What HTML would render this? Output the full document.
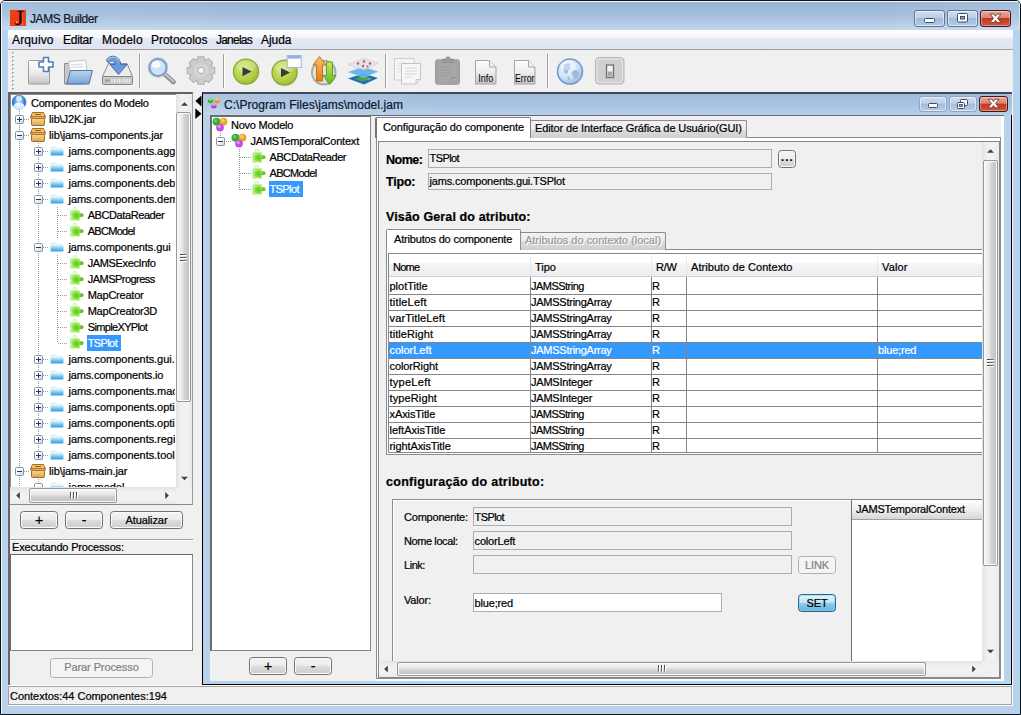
<!DOCTYPE html>
<html lang="pt"><head><meta charset="utf-8"><title>JAMS Builder</title>
<style>
*{box-sizing:border-box}
html,body{margin:0;padding:0}
body{width:1021px;height:715px;position:relative;overflow:hidden;background:#fff;font-family:"Liberation Sans",sans-serif;font-size:11px;color:#000;-webkit-text-stroke:0.22px currentColor;}
div,span,svg{position:absolute}
.t{white-space:pre;line-height:16px;height:16px;letter-spacing:-0.18px}
.b{font-weight:bold}
.sel{background:#3399ff;color:#fff}
.btn{border:1px solid #707070;border-radius:3.5px;background:linear-gradient(#f3f3f3 0%,#ececec 46%,#dcdcdc 54%,#cdcdcd 100%);box-shadow:inset 0 0 0 1px #fbfbfb;text-align:center;line-height:15px;letter-spacing:-0.1px}
.btn.pm{font-size:14px;line-height:14px}
.btn.dis{border-color:#adb2b5;background:#f4f4f4;color:#838383;box-shadow:none}
.fld{border:1px solid #abadb3;background:#f0f0f0;line-height:16px;padding-left:0.6px;white-space:pre;letter-spacing:-0.18px;overflow:hidden}
.sbv{background:linear-gradient(90deg,#e3e3e3,#f0f0f0 30%,#f2f2f2 70%,#e9e9e9)}
.sbh{background:linear-gradient(#e3e3e3,#f0f0f0 30%,#f2f2f2 70%,#e9e9e9)}
.thv{border:1px solid #979797;border-radius:2px;background:linear-gradient(90deg,#f6f6f6 0%,#e9e9ea 40%,#d4d4d7 55%,#bfbfc4 100%);box-shadow:inset 0 0 0 1px #fbfbfb}
.thh{border:1px solid #979797;border-radius:2px;background:linear-gradient(#f6f6f6 0%,#e9e9ea 40%,#d4d4d7 55%,#bfbfc4 100%);box-shadow:inset 0 0 0 1px #fbfbfb}
.dotv{width:1px;background-image:linear-gradient(#9a9a9a 50%,transparent 50%);background-size:1px 2px}
.doth{height:1px;background-image:linear-gradient(90deg,#9a9a9a 50%,transparent 50%);background-size:2px 1px}
.exp{width:9px;height:9px;border:1px solid #8593a8;border-radius:1.5px;background:linear-gradient(135deg,#fff 35%,#ccd2dc)}
.exp i{position:absolute;left:1px;top:3px;width:5px;height:1px;background:#2b3a5c}
.exp b{position:absolute;left:3px;top:1px;width:1px;height:5px;background:#2b3a5c}
</style></head>
<body>
<svg width="0" height="0" style="left:0;top:0"><defs>
<radialGradient id="gGlobe" cx="50%" cy="45%" r="55%"><stop offset="0" stop-color="#c8ecff"/><stop offset="0.4" stop-color="#7ab8f2"/><stop offset="0.8" stop-color="#2d6fd6"/><stop offset="1" stop-color="#2257b8"/></radialGradient>
<linearGradient id="gFold" x1="0" y1="0" x2="0" y2="1"><stop offset="0" stop-color="#bfe6fb"/><stop offset="1" stop-color="#2f9fe6"/></linearGradient>
<linearGradient id="gJar" x1="0" y1="0" x2="0" y2="1"><stop offset="0" stop-color="#f7d79a"/><stop offset="1" stop-color="#e0a04a"/></linearGradient>
<radialGradient id="gGreen" cx="40%" cy="35%" r="70%"><stop offset="0" stop-color="#d2e877"/><stop offset="0.7" stop-color="#aecd45"/><stop offset="1" stop-color="#98ba34"/></radialGradient>
<linearGradient id="gPage" x1="0" y1="0" x2="0" y2="1"><stop offset="0" stop-color="#fdfdfd"/><stop offset="0.5" stop-color="#eeeeee"/><stop offset="1" stop-color="#c4c4c4"/></linearGradient>
<linearGradient id="gBlue" x1="0" y1="0" x2="0" y2="1"><stop offset="0" stop-color="#bcd3ef"/><stop offset="1" stop-color="#7aa2d6"/></linearGradient>
<radialGradient id="gGlobe2" cx="40%" cy="35%" r="70%"><stop offset="0" stop-color="#fafcff"/><stop offset="0.6" stop-color="#cfe0f3"/><stop offset="1" stop-color="#8fb4df"/></radialGradient>
<radialGradient id="gPuz" gradientUnits="userSpaceOnUse" cx="7.500" cy="8.800" r="7"><stop offset="0" stop-color="#58c916"/><stop offset="0.4" stop-color="#7fdb3c"/><stop offset="0.75" stop-color="#b4f07c"/><stop offset="1" stop-color="#cdf7a2"/></radialGradient>
</defs></svg>
<div style="left:0px;top:0px;width:1021px;height:715px;background:#b9d1ea;border:1px solid #0c121c;border-radius:5px 5px 0 0;"></div>
<div style="left:1px;top:1px;width:1019px;height:29px;border-radius:4px 4px 0 0;background:linear-gradient(90deg,rgba(255,255,255,.1),rgba(255,255,255,0) 25%,rgba(255,255,255,0) 85%,rgba(255,255,255,.1)),linear-gradient(#98b4d4 0%,#a2bddb 45%,#b3cae5 75%,#c4d7ec 100%);"></div>
<div style="left:3px;top:1px;width:1015px;height:1px;background:#f2f7fc"></div>
<div style="left:1px;top:3px;width:1px;height:27px;background:#eef5fb"></div>
<div style="left:1019px;top:3px;width:1px;height:27px;background:#d5e6f5"></div>
<div style="left:1px;top:30px;width:7px;height:684px;background:#b9d1ea;border-left:1px solid #eef8fa"></div>
<div style="left:1013px;top:30px;width:7px;height:684px;background:linear-gradient(90deg,#b9d1ea 30%,#a9d7f0)"></div>
<div style="left:2px;top:706px;width:1017px;height:8px;background:#b9d1ea"></div>
<svg style="left:10px;top:10px" width="16" height="16" viewBox="0 0 16 16"><rect width="16" height="16" fill="#ee3c14"/><rect x="11.600" y="2" width="1" height="13.500" fill="#f79a78" opacity=".8"/><text x="9.300" y="15.200" font-family="Liberation Serif,serif" font-size="22" text-anchor="middle" fill="#2e0808" stroke="#2e0808" stroke-width=".5">J</text><circle cx="6.600" cy="12.300" r=".9" fill="#f7d5c8"/></svg>
<span class="t " style="left:30px;top:11px;font-size:12px;letter-spacing:-0.43px;color:#10182c">JAMS Builder</span>
<div style="left:914px;top:10px;width:31px;height:17px;border:1px solid #5d7596;border-radius:3px;background:linear-gradient(#cfddef 0%,#bccfe7 45%,#9fbadb 50%,#b5cbe6 100%);box-shadow:inset 0 0 0 1px rgba(255,255,255,.55)"></div>
<div style="left:947px;top:10px;width:31px;height:17px;border:1px solid #5d7596;border-radius:3px;background:linear-gradient(#cfddef 0%,#bccfe7 45%,#9fbadb 50%,#b5cbe6 100%);box-shadow:inset 0 0 0 1px rgba(255,255,255,.55)"></div>
<div style="left:980px;top:10px;width:31px;height:17px;border:1px solid #431422;border-radius:3px;background:linear-gradient(#e9a99c 0%,#d98270 45%,#c4371c 50%,#cf5a3a 100%);box-shadow:inset 0 0 0 1px rgba(255,255,255,.35)"></div>
<svg style="left:914px;top:10px" width="31" height="17" viewBox="0 0 31 17"><rect x="10.500" y="8.500" width="10" height="4" rx="1" fill="#fff" stroke="#3c4a63"/></svg>
<svg style="left:947px;top:10px" width="31" height="17" viewBox="0 0 31 17"><rect x="10.500" y="3.500" width="10" height="8.500" rx="1" fill="#fff" stroke="#3c4a63"/><rect x="13.500" y="6.500" width="4" height="2.500" fill="#8ea3c0" stroke="#3c4a63"/></svg>
<svg style="left:980px;top:10px" width="31" height="17" viewBox="0 0 31 17"><path d="M10 4h3.800l1.700 2.200 1.700-2.200h3.800l-3.500 4.300 3.500 4.300h-3.800l-1.700-2.200-1.700 2.200h-3.800l3.500-4.300z" fill="#fff" stroke="#6b3a3a" stroke-width="0.9" stroke-linejoin="round"/></svg>
<div style="left:8px;top:30px;width:1005px;height:676px;background:#f0f0f0"></div>
<div style="left:1012px;top:92px;width:1px;height:593px;background:#eafafa"></div>
<div style="left:8px;top:30px;width:1005px;height:19px;background:linear-gradient(#fdfdfe 0%,#f5f7fc 38%,#e3e8f4 46%,#dfe4f2 100%)"></div>
<div style="left:8px;top:49px;width:1005px;height:1px;background:#a0a0a0"></div>
<span class="t " style="left:12px;top:32px;font-size:12px;letter-spacing:0.14px;">Arquivo</span>
<span class="t " style="left:63px;top:32px;font-size:12px;letter-spacing:-0.27px;">Editar</span>
<span class="t " style="left:102px;top:32px;font-size:12px;letter-spacing:0.27px;">Modelo</span>
<span class="t " style="left:151px;top:32px;font-size:12px;letter-spacing:-0.02px;">Protocolos</span>
<span class="t " style="left:216px;top:32px;font-size:12px;letter-spacing:-0.78px;">Janelas</span>
<span class="t " style="left:261px;top:32px;font-size:12px;letter-spacing:-0.05px;">Ajuda</span>
<div style="left:8px;top:50px;width:1005px;height:41px;background:#f0f0f0"></div>
<div style="left:12px;top:52px;width:2px;height:2px;background:#a8a8a8"></div>
<div style="left:13px;top:53px;width:1px;height:1px;background:#fff"></div>
<div style="left:12px;top:56px;width:2px;height:2px;background:#a8a8a8"></div>
<div style="left:13px;top:57px;width:1px;height:1px;background:#fff"></div>
<div style="left:12px;top:60px;width:2px;height:2px;background:#a8a8a8"></div>
<div style="left:13px;top:61px;width:1px;height:1px;background:#fff"></div>
<div style="left:12px;top:64px;width:2px;height:2px;background:#a8a8a8"></div>
<div style="left:13px;top:65px;width:1px;height:1px;background:#fff"></div>
<div style="left:12px;top:68px;width:2px;height:2px;background:#a8a8a8"></div>
<div style="left:13px;top:69px;width:1px;height:1px;background:#fff"></div>
<div style="left:12px;top:72px;width:2px;height:2px;background:#a8a8a8"></div>
<div style="left:13px;top:73px;width:1px;height:1px;background:#fff"></div>
<div style="left:12px;top:76px;width:2px;height:2px;background:#a8a8a8"></div>
<div style="left:13px;top:77px;width:1px;height:1px;background:#fff"></div>
<div style="left:12px;top:80px;width:2px;height:2px;background:#a8a8a8"></div>
<div style="left:13px;top:81px;width:1px;height:1px;background:#fff"></div>
<div style="left:12px;top:84px;width:2px;height:2px;background:#a8a8a8"></div>
<div style="left:13px;top:85px;width:1px;height:1px;background:#fff"></div>
<div style="left:12px;top:88px;width:2px;height:2px;background:#a8a8a8"></div>
<div style="left:13px;top:89px;width:1px;height:1px;background:#fff"></div>
<div style="left:139px;top:54px;width:1px;height:34px;background:#a0a0a0"></div>
<div style="left:140px;top:54px;width:1px;height:34px;background:#fff"></div>
<div style="left:223px;top:54px;width:1px;height:34px;background:#a0a0a0"></div>
<div style="left:224px;top:54px;width:1px;height:34px;background:#fff"></div>
<div style="left:385px;top:54px;width:1px;height:34px;background:#a0a0a0"></div>
<div style="left:386px;top:54px;width:1px;height:34px;background:#fff"></div>
<div style="left:547px;top:54px;width:1px;height:34px;background:#a0a0a0"></div>
<div style="left:548px;top:54px;width:1px;height:34px;background:#fff"></div>
<svg style="left:26px;top:55px" width="32" height="32" viewBox="0 0 32 32"><rect x="2.500" y="5.500" width="21" height="23.500" rx="1" fill="url(#gPage)" stroke="#9c9c9c"/><path d="M17.500 2.500h5v4.500h4.500v5h-4.500v4.500h-5v-4.500h-4.500v-5h4.500z" fill="#fff" stroke="#4f7fbd" stroke-width="1.600" stroke-linejoin="round"/></svg>
<svg style="left:62px;top:56px" width="34" height="32" viewBox="0 0 34 32"><path d="M2.500 7.500h6l1.500 2h12v18.500h-19.500z" fill="#c9c9c9" stroke="#8f8f8f"/><path d="M6.500 5.500l17-1.500 2 14-17 3z" fill="#fdfdfd" stroke="#b4b4b4" stroke-width=".8"/><path d="M9 9l12-1M9.500 11.500l12-1" stroke="#d8d8d8" stroke-width="1"/><path d="M8.500 14.500h22l-3.500 13.500h-22.500z" fill="url(#gBlue)" stroke="#56789f" stroke-linejoin="round"/></svg>
<svg style="left:100px;top:54px" width="36" height="34" viewBox="0 0 36 34"><path d="M8.500 9.500h18.500l5.500 13h-30z" fill="#ececec" stroke="#8d8d8d" stroke-linejoin="round"/><rect x="2.500" y="22.500" width="30" height="8" rx="1" fill="#c9c9c9" stroke="#858585"/><path d="M12 25v3.500M14.500 25v3.500M17 25v3.500M19.500 25v3.500M22 25v3.500M24.500 25v3.500M27 25v3.500M29.500 25v3.500" stroke="#f2f2f2" stroke-width="1"/><rect x="5" y="25.500" width="5" height="2" fill="#9a9a9a"/><path d="M6.500 7c1.500-6.500 12.500-7.500 14.500 3.500h6l-8.500 10-8.500-10h5.500c-.8-4-5.500-4.500-6.500-1.500z" fill="#6a9bd9" stroke="#4273b5" stroke-width="1" stroke-linejoin="round"/><path d="M8 6.500c2-4.500 9-4.500 11 1" fill="none" stroke="#a9c8ee" stroke-width="1.200"/></svg>
<svg style="left:146px;top:55px" width="32" height="32" viewBox="0 0 32 32"><path d="M19 19.500l8.500 7.500" stroke="#8a8a8a" stroke-width="4.600" stroke-linecap="round"/><path d="M19.500 19.500l8 7" stroke="#c9c9c9" stroke-width="1.800" stroke-linecap="round"/><circle cx="12" cy="12.500" r="8.600" fill="#cfe3f8" stroke="#7f9dc6" stroke-width="2.200"/><circle cx="12" cy="12.500" r="9.900" fill="none" stroke="#b8c4d6" stroke-width=".8"/><ellipse cx="10" cy="9.500" rx="4.500" ry="3.500" fill="#fff" opacity=".85"/></svg>
<svg style="left:185px;top:55px" width="32" height="32" viewBox="0 0 32 32"><path d="M26.2 11.5 L29.7 12.5 L29.7 18.5 L26.2 19.5 L26.1 19.9 L27.8 23.1 L23.6 27.3 L20.4 25.6 L20.0 25.7 L19.0 29.2 L13.0 29.2 L12.0 25.7 L11.6 25.6 L8.4 27.3 L4.2 23.1 L5.9 19.9 L5.8 19.5 L2.3 18.5 L2.3 12.5 L5.8 11.5 L5.9 11.1 L4.2 7.9 L8.4 3.7 L11.6 5.4 L12.0 5.3 L13.0 1.8 L19.0 1.8 L20.0 5.3 L20.4 5.4 L23.6 3.7 L27.8 7.9 L26.1 11.1z" fill="#cecece" stroke="#b2b2b2" stroke-width="1.200" stroke-linejoin="round"/><circle cx="16" cy="15.500" r="8.500" fill="#d4d4d4" stroke="#c4c4c4"/><circle cx="16" cy="15.500" r="3.200" fill="#f6f6f6" stroke="#adadad"/></svg>
<svg style="left:232px;top:57px" width="30" height="30" viewBox="0 0 30 30"><circle cx="14" cy="14.6" r="12.600" fill="url(#gGreen)" stroke="#86a630" stroke-width="1.200"/><ellipse cx="14" cy="9.6" rx="9.500" ry="6" fill="#fff" opacity=".22"/><path d="M10.5 9.9l9 4.700-9 4.700z" fill="#3a3a3a"/></svg>
<svg style="left:270px;top:54px" width="34" height="34" viewBox="0 0 34 34"><circle cx="14.6" cy="18.6" r="12.600" fill="url(#gGreen)" stroke="#86a630" stroke-width="1.200"/><ellipse cx="14.6" cy="13.6" rx="9.500" ry="6" fill="#fff" opacity=".22"/><path d="M11 13.9l9 4.700-9 4.700z" fill="#3a3a3a"/><rect x="17.200" y="1.500" width="14" height="12" fill="#fff" stroke="#a3b7d2" stroke-width="1"/><rect x="17.700" y="2" width="13" height="2.600" fill="#8db2e3"/></svg>
<svg style="left:309px;top:54px" width="30" height="34" viewBox="0 0 30 34"><circle cx="14.700" cy="18.600" r="11.800" fill="#e2e2e2" stroke="#ababab" stroke-width="2"/><defs><linearGradient id="gOr" x1="0" y1="0" x2="0" y2="1"><stop offset="0" stop-color="#fbc36e"/><stop offset="1" stop-color="#e8780c"/></linearGradient><linearGradient id="gGr" x1="0" y1="0" x2="0" y2="1"><stop offset="0" stop-color="#c6e85a"/><stop offset="1" stop-color="#62b524"/></linearGradient></defs><path d="M10.500 2.500l6.500 8.500h-3.500v16h-6v-16h-3.500z" fill="url(#gOr)" stroke="#c2660c" stroke-width=".9" stroke-linejoin="round"/><path d="M20.500 30.500l6.500-9h-3.500v-13.500h-6v13.500h-3.500z" fill="url(#gGr)" stroke="#4f9a1e" stroke-width=".9" stroke-linejoin="round"/></svg>
<svg style="left:346px;top:55px" width="34" height="32" viewBox="0 0 34 32"><path d="M2 23.500l15-5 15 4.500-14 6.500z" fill="#1f6fb6"/><path d="M9 23.500l8-2.500 6 3-7 3z" fill="#3fa64a"/><path d="M20 22l6 1.500-4 2z" fill="#58b85a"/><path d="M2 17l15-5 15 4.500-14 6z" fill="#5fb0ea" opacity=".92"/><path d="M2 17l15-5 15 4.500-14 6z" fill="none" stroke="#9fd2f6" stroke-width=".6"/><path d="M2 9.500l15-6 15 4.500-14 7z" fill="#dfe5ee" opacity=".92" stroke="#b9c5d6" stroke-width=".6"/><circle cx="12" cy="8.500" r="1.200" fill="#e0483f"/><circle cx="18" cy="6.500" r="1.200" fill="#e0483f"/><circle cx="24" cy="8.500" r="1.200" fill="#e0483f"/><circle cx="17" cy="11" r="1.200" fill="#e0483f"/><circle cx="21.500" cy="11.500" r="1" fill="#e0483f"/></svg>
<svg style="left:392px;top:56px" width="32" height="32" viewBox="0 0 32 32"><rect x="2.500" y="2.500" width="19.500" height="21.500" fill="#f6f6f6" stroke="#cdcdcd"/><path d="M5 7h8M5 10h5M5 13h5M5 16h5" stroke="#e2e2e2"/><path d="M9.500 7.500h19v16l-4.500 4.500h-14.500z" fill="#f7f7f7" stroke="#c2c2c2"/><path d="M28.500 23.500h-4.500v4.500" fill="#e6e6e6" stroke="#c2c2c2"/><path d="M13 12h12M13 15h12M13 18h12M13 21h8" stroke="#d4d4d4"/></svg>
<svg style="left:433px;top:55px" width="30" height="32" viewBox="0 0 30 32"><rect x="2.500" y="4.800" width="24" height="24.500" rx="2" fill="#a3a3a3" stroke="#9b9b9b"/><path d="M9.500 7.500v-3.500h3l1-2h3l1 2h3v3.500z" fill="#979797" stroke="#8f8f8f" stroke-width=".6"/><rect x="5.500" y="9" width="18" height="17.500" fill="#a9a9a9" opacity=".7"/><path d="M8 12h11M8 15h11M8 18h11M8 21h8" stroke="#9a9a9a"/><path d="M18.500 26.500v-4h5" fill="none" stroke="#929292"/></svg>
<svg style="left:474px;top:59px" width="26" height="28" viewBox="0 0 26 28"><path d="M1.500 1.500h14l6.500 6.500v17h-20.500z" fill="url(#gPage)" stroke="#a5a5a5"/><path d="M15.500 1.500v6.500h6.500" fill="#f3f3f3" stroke="#a5a5a5"/><text x="11.700" y="23.400" text-anchor="middle" textLength="15" lengthAdjust="spacingAndGlyphs" font-family="Liberation Sans,sans-serif" font-size="10" fill="#000">Info</text></svg>
<svg style="left:512.5px;top:59px" width="26" height="28" viewBox="0 0 26 28"><path d="M1.500 1.500h14l6.500 6.500v17h-20.500z" fill="url(#gPage)" stroke="#a5a5a5"/><path d="M15.500 1.500v6.500h6.500" fill="#f3f3f3" stroke="#a5a5a5"/><text x="11.700" y="23.400" text-anchor="middle" textLength="19.5" lengthAdjust="spacingAndGlyphs" font-family="Liberation Sans,sans-serif" font-size="10" fill="#000">Error</text></svg>
<svg style="left:555px;top:57px" width="30" height="30" viewBox="0 0 30 30"><circle cx="15" cy="14.600" r="12.500" fill="url(#gGlobe2)" stroke="#7199c8" stroke-width="1.500"/><path d="M9 8c2.500-2 5.500-2.500 7-1l-1.500 2.500 2 1.500-3 2.500-1.500 3.500-2.500-1-1-3.500zM16.500 15.500l3-2.500 3.500.5 1 3-2 4.500-3 1.500-1-3.500z M12 19l2.500 1 .5 3.500-2-1z" fill="#8db3dc" opacity=".8"/><ellipse cx="13" cy="8.500" rx="8" ry="5" fill="#fff" opacity=".35"/></svg>
<svg style="left:594px;top:56px" width="32" height="30" viewBox="0 0 32 30"><rect x="1.500" y="1.500" width="28.500" height="26.500" rx="3.500" fill="#d9d9d9" stroke="#b4b4b4"/><rect x="3" y="3" width="25.500" height="23.500" rx="2.500" fill="#d0d0d0" stroke="#e6e6e6" stroke-width=".8"/><rect x="12.500" y="9" width="7" height="12.500" fill="#f2f2f2" stroke="#6f6f6f" stroke-width="1.300"/><rect x="13.600" y="15.500" width="4.800" height="5" fill="#a9a9a9"/></svg>
<div style="left:8px;top:92px;width:185px;height:413px;background:#fff;border:2px solid #626262;border-right:1px solid #9a9da5;border-bottom:1px solid #828790;box-shadow:inset 1px 1px 0 #8e8e8e"></div>
<div style="left:10px;top:94px;width:165px;height:393px;overflow:hidden">
<div class="dotv" style="left:9px;top:15px;width:1px;height:378px;"></div>
<div class="dotv" style="left:28px;top:49px;width:1px;height:312px;"></div>
<div class="dotv" style="left:28px;top:385px;width:1px;height:8px;"></div>
<div class="dotv" style="left:47px;top:113px;width:1px;height:32px;"></div>
<div class="dotv" style="left:47px;top:161px;width:1px;height:88px;"></div>
<svg style="left:2px;top:1px" width="16" height="16" viewBox="0 0 16 16"><circle cx="7" cy="7.200" r="7" fill="url(#gGlobe)" stroke="#4f86c9" stroke-width="0.700"/><ellipse cx="7" cy="11" rx="5.600" ry="3.300" fill="#fff" opacity="0.850"/><ellipse cx="7" cy="3.300" rx="3.200" ry="2.600" fill="#e3f6ff" opacity="0.800"/></svg>
<span class="t " style="left:21px;top:1px;letter-spacing:-0.25px;">Componentes do Modelo</span>
<div class="doth" style="left:10px;top:25px;width:9px;height:1px;"></div>
<div class="exp" style="left:5px;top:21px"><i></i><b></b></div>
<svg style="left:20px;top:17px" width="16" height="16" viewBox="0 0 16 16"><path d="M2.5 1.5h11l1.5 3.5v2h-14v-2z" fill="#f3c777" stroke="#a8691f" stroke-width="1"/><rect x="1.5" y="7.5" width="13" height="7" rx="1" fill="url(#gJar)" stroke="#a8691f"/><rect x="5" y="3" width="6" height="1" fill="#8a5a22"/><rect x="1" y="5.5" width="14" height="2" fill="#e9b25c" stroke="#a8691f" stroke-width="0.8"/></svg>
<span class="t " style="left:39px;top:17px;letter-spacing:-0.13px;">lib\J2K.jar</span>
<div class="doth" style="left:10px;top:41px;width:9px;height:1px;"></div>
<div class="exp" style="left:5px;top:37px"><i></i></div>
<svg style="left:20px;top:33px" width="16" height="16" viewBox="0 0 16 16"><path d="M2.5 1.5h11l1.5 3.5v2h-14v-2z" fill="#f3c777" stroke="#a8691f" stroke-width="1"/><rect x="1.5" y="7.5" width="13" height="7" rx="1" fill="url(#gJar)" stroke="#a8691f"/><rect x="5" y="3" width="6" height="1" fill="#8a5a22"/><rect x="1" y="5.5" width="14" height="2" fill="#e9b25c" stroke="#a8691f" stroke-width="0.8"/></svg>
<span class="t " style="left:39px;top:33px;letter-spacing:-0.09px;">lib\jams-components.jar</span>
<div class="doth" style="left:29px;top:57px;width:10px;height:1px;"></div>
<div class="exp" style="left:24px;top:53px"><i></i><b></b></div>
<svg style="left:40px;top:49px" width="16" height="16" viewBox="0 0 16 16"><path d="M1 4.300h4.600l1 1.400h6.400v2.300h-12z" fill="#eef7fd" stroke="#cfe3f2" stroke-width=".6"/><rect x="0.500" y="6.800" width="13" height="5.600" rx=".8" fill="url(#gFold)"/></svg>
<span class="t " style="left:58.5px;top:49px;letter-spacing:-0.04px;">jams.components.aggregate</span>
<div class="doth" style="left:29px;top:73px;width:10px;height:1px;"></div>
<div class="exp" style="left:24px;top:69px"><i></i><b></b></div>
<svg style="left:40px;top:65px" width="16" height="16" viewBox="0 0 16 16"><path d="M1 4.300h4.600l1 1.400h6.400v2.300h-12z" fill="#eef7fd" stroke="#cfe3f2" stroke-width=".6"/><rect x="0.500" y="6.800" width="13" height="5.600" rx=".8" fill="url(#gFold)"/></svg>
<span class="t " style="left:58.5px;top:65px;letter-spacing:-0.04px;">jams.components.concurrency</span>
<div class="doth" style="left:29px;top:89px;width:10px;height:1px;"></div>
<div class="exp" style="left:24px;top:85px"><i></i><b></b></div>
<svg style="left:40px;top:81px" width="16" height="16" viewBox="0 0 16 16"><path d="M1 4.300h4.600l1 1.400h6.400v2.300h-12z" fill="#eef7fd" stroke="#cfe3f2" stroke-width=".6"/><rect x="0.500" y="6.800" width="13" height="5.600" rx=".8" fill="url(#gFold)"/></svg>
<span class="t " style="left:58.5px;top:81px;letter-spacing:-0.04px;">jams.components.debug</span>
<div class="doth" style="left:29px;top:105px;width:10px;height:1px;"></div>
<div class="exp" style="left:24px;top:101px"><i></i></div>
<svg style="left:40px;top:97px" width="16" height="16" viewBox="0 0 16 16"><path d="M1 4.300h4.600l1 1.400h6.400v2.300h-12z" fill="#eef7fd" stroke="#cfe3f2" stroke-width=".6"/><rect x="0.500" y="6.800" width="13" height="5.600" rx=".8" fill="url(#gFold)"/></svg>
<span class="t " style="left:58.5px;top:97px;letter-spacing:-0.04px;">jams.components.demo</span>
<div class="doth" style="left:48px;top:121px;width:10px;height:1px;"></div>
<svg style="left:59px;top:113px" width="16" height="16" viewBox="0 0 16 16"><rect x="4.200" y="0.400" width="3.400" height="4" rx="1.400" fill="#f2fbe6" stroke="#bfe79c" stroke-width=".7"/><path d="M1 3.300h9.800v3.400c1.400-.8 3.800-.4 3.800 1.500s-2.400 2.400-3.800 1.600v4h-3.200c.4-1.300-2.200-1.300-1.800 0h-4.800v-3.400c1.300.6 1.300-2 0-1.500z" fill="url(#gPuz)"/><path d="M10.800 6.700c1.400-.8 3.800-.4 3.800 1.500s-2.400 2.400-3.800 1.600z" fill="#76c034"/></svg>
<span class="t " style="left:77.7px;top:113px;letter-spacing:-0.41px;">ABCDataReader</span>
<div class="doth" style="left:48px;top:137px;width:10px;height:1px;"></div>
<svg style="left:59px;top:129px" width="16" height="16" viewBox="0 0 16 16"><rect x="4.200" y="0.400" width="3.400" height="4" rx="1.400" fill="#f2fbe6" stroke="#bfe79c" stroke-width=".7"/><path d="M1 3.300h9.800v3.400c1.400-.8 3.800-.4 3.800 1.500s-2.400 2.400-3.800 1.600v4h-3.200c.4-1.300-2.200-1.300-1.800 0h-4.800v-3.400c1.300.6 1.300-2 0-1.500z" fill="url(#gPuz)"/><path d="M10.800 6.700c1.400-.8 3.800-.4 3.800 1.500s-2.400 2.400-3.800 1.600z" fill="#76c034"/></svg>
<span class="t " style="left:77.7px;top:129px;letter-spacing:-0.71px;">ABCModel</span>
<div class="doth" style="left:29px;top:153px;width:10px;height:1px;"></div>
<div class="exp" style="left:24px;top:149px"><i></i></div>
<svg style="left:40px;top:145px" width="16" height="16" viewBox="0 0 16 16"><path d="M1 4.300h4.600l1 1.400h6.400v2.300h-12z" fill="#eef7fd" stroke="#cfe3f2" stroke-width=".6"/><rect x="0.500" y="6.800" width="13" height="5.600" rx=".8" fill="url(#gFold)"/></svg>
<span class="t " style="left:58.5px;top:145px;letter-spacing:-0.10px;">jams.components.gui</span>
<div class="doth" style="left:48px;top:169px;width:10px;height:1px;"></div>
<svg style="left:59px;top:161px" width="16" height="16" viewBox="0 0 16 16"><rect x="4.200" y="0.400" width="3.400" height="4" rx="1.400" fill="#f2fbe6" stroke="#bfe79c" stroke-width=".7"/><path d="M1 3.300h9.800v3.400c1.400-.8 3.800-.4 3.800 1.500s-2.400 2.400-3.800 1.600v4h-3.200c.4-1.300-2.200-1.300-1.800 0h-4.800v-3.400c1.300.6 1.300-2 0-1.500z" fill="url(#gPuz)"/><path d="M10.800 6.700c1.400-.8 3.800-.4 3.800 1.500s-2.400 2.400-3.800 1.600z" fill="#76c034"/></svg>
<span class="t " style="left:77.7px;top:161px;letter-spacing:-0.36px;">JAMSExecInfo</span>
<div class="doth" style="left:48px;top:185px;width:10px;height:1px;"></div>
<svg style="left:59px;top:177px" width="16" height="16" viewBox="0 0 16 16"><rect x="4.200" y="0.400" width="3.400" height="4" rx="1.400" fill="#f2fbe6" stroke="#bfe79c" stroke-width=".7"/><path d="M1 3.300h9.800v3.400c1.400-.8 3.800-.4 3.800 1.500s-2.400 2.400-3.800 1.600v4h-3.200c.4-1.300-2.200-1.300-1.800 0h-4.800v-3.400c1.300.6 1.300-2 0-1.500z" fill="url(#gPuz)"/><path d="M10.800 6.700c1.400-.8 3.800-.4 3.800 1.500s-2.400 2.400-3.800 1.600z" fill="#76c034"/></svg>
<span class="t " style="left:77.7px;top:177px;letter-spacing:-0.52px;">JAMSProgress</span>
<div class="doth" style="left:48px;top:201px;width:10px;height:1px;"></div>
<svg style="left:59px;top:193px" width="16" height="16" viewBox="0 0 16 16"><rect x="4.200" y="0.400" width="3.400" height="4" rx="1.400" fill="#f2fbe6" stroke="#bfe79c" stroke-width=".7"/><path d="M1 3.300h9.800v3.400c1.400-.8 3.800-.4 3.800 1.500s-2.400 2.400-3.800 1.600v4h-3.200c.4-1.300-2.200-1.300-1.800 0h-4.800v-3.400c1.300.6 1.300-2 0-1.500z" fill="url(#gPuz)"/><path d="M10.800 6.700c1.400-.8 3.800-.4 3.800 1.500s-2.400 2.400-3.800 1.600z" fill="#76c034"/></svg>
<span class="t " style="left:77.7px;top:193px;letter-spacing:-0.23px;">MapCreator</span>
<div class="doth" style="left:48px;top:217px;width:10px;height:1px;"></div>
<svg style="left:59px;top:209px" width="16" height="16" viewBox="0 0 16 16"><rect x="4.200" y="0.400" width="3.400" height="4" rx="1.400" fill="#f2fbe6" stroke="#bfe79c" stroke-width=".7"/><path d="M1 3.300h9.800v3.400c1.400-.8 3.800-.4 3.800 1.500s-2.400 2.400-3.800 1.600v4h-3.200c.4-1.300-2.200-1.300-1.800 0h-4.800v-3.400c1.300.6 1.300-2 0-1.500z" fill="url(#gPuz)"/><path d="M10.800 6.700c1.400-.8 3.800-.4 3.800 1.500s-2.400 2.400-3.800 1.600z" fill="#76c034"/></svg>
<span class="t " style="left:77.7px;top:209px;letter-spacing:-0.23px;">MapCreator3D</span>
<div class="doth" style="left:48px;top:233px;width:10px;height:1px;"></div>
<svg style="left:59px;top:225px" width="16" height="16" viewBox="0 0 16 16"><rect x="4.200" y="0.400" width="3.400" height="4" rx="1.400" fill="#f2fbe6" stroke="#bfe79c" stroke-width=".7"/><path d="M1 3.300h9.800v3.400c1.400-.8 3.800-.4 3.800 1.500s-2.400 2.400-3.800 1.600v4h-3.200c.4-1.300-2.200-1.300-1.800 0h-4.800v-3.400c1.300.6 1.300-2 0-1.500z" fill="url(#gPuz)"/><path d="M10.800 6.700c1.400-.8 3.800-.4 3.800 1.500s-2.400 2.400-3.800 1.600z" fill="#76c034"/></svg>
<span class="t " style="left:77.7px;top:225px;letter-spacing:-0.64px;">SimpleXYPlot</span>
<div class="doth" style="left:48px;top:249px;width:10px;height:1px;"></div>
<svg style="left:59px;top:241px" width="16" height="16" viewBox="0 0 16 16"><rect x="4.200" y="0.400" width="3.400" height="4" rx="1.400" fill="#f2fbe6" stroke="#bfe79c" stroke-width=".7"/><path d="M1 3.300h9.800v3.400c1.400-.8 3.800-.4 3.800 1.500s-2.400 2.400-3.800 1.600v4h-3.200c.4-1.300-2.200-1.300-1.800 0h-4.800v-3.400c1.300.6 1.300-2 0-1.500z" fill="url(#gPuz)"/><path d="M10.800 6.700c1.400-.8 3.800-.4 3.800 1.500s-2.400 2.400-3.800 1.600z" fill="#76c034"/></svg>
<div style="left:77px;top:241px;width:34px;height:16px;background:#3399ff"></div>
<span class="t " style="left:77.7px;top:241px;letter-spacing:-0.60px;color:#fff">TSPlot</span>
<div class="doth" style="left:29px;top:265px;width:10px;height:1px;"></div>
<div class="exp" style="left:24px;top:261px"><i></i><b></b></div>
<svg style="left:40px;top:257px" width="16" height="16" viewBox="0 0 16 16"><path d="M1 4.300h4.600l1 1.400h6.400v2.300h-12z" fill="#eef7fd" stroke="#cfe3f2" stroke-width=".6"/><rect x="0.500" y="6.800" width="13" height="5.600" rx=".8" fill="url(#gFold)"/></svg>
<span class="t " style="left:58.5px;top:257px;letter-spacing:-0.04px;">jams.components.gui.spreadsheet</span>
<div class="doth" style="left:29px;top:281px;width:10px;height:1px;"></div>
<div class="exp" style="left:24px;top:277px"><i></i><b></b></div>
<svg style="left:40px;top:273px" width="16" height="16" viewBox="0 0 16 16"><path d="M1 4.300h4.600l1 1.400h6.400v2.300h-12z" fill="#eef7fd" stroke="#cfe3f2" stroke-width=".6"/><rect x="0.500" y="6.800" width="13" height="5.600" rx=".8" fill="url(#gFold)"/></svg>
<span class="t " style="left:58.5px;top:273px;letter-spacing:-0.17px;">jams.components.io</span>
<div class="doth" style="left:29px;top:297px;width:10px;height:1px;"></div>
<div class="exp" style="left:24px;top:293px"><i></i><b></b></div>
<svg style="left:40px;top:289px" width="16" height="16" viewBox="0 0 16 16"><path d="M1 4.300h4.600l1 1.400h6.400v2.300h-12z" fill="#eef7fd" stroke="#cfe3f2" stroke-width=".6"/><rect x="0.500" y="6.800" width="13" height="5.600" rx=".8" fill="url(#gFold)"/></svg>
<span class="t " style="left:58.5px;top:289px;letter-spacing:-0.04px;">jams.components.machine</span>
<div class="doth" style="left:29px;top:313px;width:10px;height:1px;"></div>
<div class="exp" style="left:24px;top:309px"><i></i><b></b></div>
<svg style="left:40px;top:305px" width="16" height="16" viewBox="0 0 16 16"><path d="M1 4.300h4.600l1 1.400h6.400v2.300h-12z" fill="#eef7fd" stroke="#cfe3f2" stroke-width=".6"/><rect x="0.500" y="6.800" width="13" height="5.600" rx=".8" fill="url(#gFold)"/></svg>
<span class="t " style="left:58.5px;top:305px;letter-spacing:-0.04px;">jams.components.optimizer</span>
<div class="doth" style="left:29px;top:329px;width:10px;height:1px;"></div>
<div class="exp" style="left:24px;top:325px"><i></i><b></b></div>
<svg style="left:40px;top:321px" width="16" height="16" viewBox="0 0 16 16"><path d="M1 4.300h4.600l1 1.400h6.400v2.300h-12z" fill="#eef7fd" stroke="#cfe3f2" stroke-width=".6"/><rect x="0.500" y="6.800" width="13" height="5.600" rx=".8" fill="url(#gFold)"/></svg>
<span class="t " style="left:58.5px;top:321px;letter-spacing:-0.04px;">jams.components.optimizer.tools</span>
<div class="doth" style="left:29px;top:345px;width:10px;height:1px;"></div>
<div class="exp" style="left:24px;top:341px"><i></i><b></b></div>
<svg style="left:40px;top:337px" width="16" height="16" viewBox="0 0 16 16"><path d="M1 4.300h4.600l1 1.400h6.400v2.300h-12z" fill="#eef7fd" stroke="#cfe3f2" stroke-width=".6"/><rect x="0.500" y="6.800" width="13" height="5.600" rx=".8" fill="url(#gFold)"/></svg>
<span class="t " style="left:58.5px;top:337px;letter-spacing:-0.04px;">jams.components.regionalization</span>
<div class="doth" style="left:29px;top:361px;width:10px;height:1px;"></div>
<div class="exp" style="left:24px;top:357px"><i></i><b></b></div>
<svg style="left:40px;top:353px" width="16" height="16" viewBox="0 0 16 16"><path d="M1 4.300h4.600l1 1.400h6.400v2.300h-12z" fill="#eef7fd" stroke="#cfe3f2" stroke-width=".6"/><rect x="0.500" y="6.800" width="13" height="5.600" rx=".8" fill="url(#gFold)"/></svg>
<span class="t " style="left:58.5px;top:353px;letter-spacing:-0.04px;">jams.components.tools</span>
<div class="doth" style="left:10px;top:377px;width:9px;height:1px;"></div>
<div class="exp" style="left:5px;top:373px"><i></i></div>
<svg style="left:20px;top:369px" width="16" height="16" viewBox="0 0 16 16"><path d="M2.5 1.5h11l1.5 3.5v2h-14v-2z" fill="#f3c777" stroke="#a8691f" stroke-width="1"/><rect x="1.5" y="7.5" width="13" height="7" rx="1" fill="url(#gJar)" stroke="#a8691f"/><rect x="5" y="3" width="6" height="1" fill="#8a5a22"/><rect x="1" y="5.5" width="14" height="2" fill="#e9b25c" stroke="#a8691f" stroke-width="0.8"/></svg>
<span class="t " style="left:39px;top:369px;letter-spacing:-0.10px;">lib\jams-main.jar</span>
<div class="doth" style="left:29px;top:393px;width:10px;height:1px;"></div>
<div class="exp" style="left:24px;top:389px"><i></i></div>
<svg style="left:40px;top:385px" width="16" height="16" viewBox="0 0 16 16"><path d="M1 4.300h4.600l1 1.400h6.400v2.300h-12z" fill="#eef7fd" stroke="#cfe3f2" stroke-width=".6"/><rect x="0.500" y="6.800" width="13" height="5.600" rx=".8" fill="url(#gFold)"/></svg>
<span class="t " style="left:58.5px;top:385px;letter-spacing:-0.04px;">jams.model</span>
</div>
<div class="sbv" style="left:176px;top:94px;width:16px;height:393px;"></div>
<svg style="left:0;top:0" width="1021" height="715"><polygon points="181.0,105.8 188.0,105.8 184.5,102.2" fill="#404040"/></svg>
<svg style="left:0;top:0" width="1021" height="715"><polygon points="181.0,476.7 188.0,476.7 184.5,480.3" fill="#404040"/></svg>
<div class="thv" style="left:176px;top:112px;width:15px;height:290px;"></div>
<div style="left:180px;top:254px;width:7px;height:1px;background:linear-gradient(90deg,#3a3a3a,#8a8a8a)"></div>
<div style="left:180px;top:255px;width:7px;height:1px;background:#fff"></div>
<div style="left:180px;top:257px;width:7px;height:1px;background:linear-gradient(90deg,#3a3a3a,#8a8a8a)"></div>
<div style="left:180px;top:258px;width:7px;height:1px;background:#fff"></div>
<div style="left:180px;top:260px;width:7px;height:1px;background:linear-gradient(90deg,#3a3a3a,#8a8a8a)"></div>
<div style="left:180px;top:261px;width:7px;height:1px;background:#fff"></div>
<div class="sbh" style="left:10px;top:487px;width:166px;height:17px;"></div>
<div style="left:176px;top:487px;width:16px;height:17px;background:#f0f0f0"></div>
<svg style="left:0;top:0" width="1021" height="715"><polygon points="19.8,492.0 19.8,499.0 16.2,495.5" fill="#404040"/></svg>
<svg style="left:0;top:0" width="1021" height="715"><polygon points="165.2,492.0 165.2,499.0 168.8,495.5" fill="#404040"/></svg>
<div class="thh" style="left:29px;top:488px;width:88px;height:15px;"></div>
<div style="left:70px;top:492px;width:1px;height:7px;background:linear-gradient(#3a3a3a,#8a8a8a)"></div>
<div style="left:71px;top:492px;width:1px;height:7px;background:#fff"></div>
<div style="left:73px;top:492px;width:1px;height:7px;background:linear-gradient(#3a3a3a,#8a8a8a)"></div>
<div style="left:74px;top:492px;width:1px;height:7px;background:#fff"></div>
<div style="left:76px;top:492px;width:1px;height:7px;background:linear-gradient(#3a3a3a,#8a8a8a)"></div>
<div style="left:77px;top:492px;width:1px;height:7px;background:#fff"></div>
<div class="btn pm" style="left:20px;top:511px;width:38px;height:18px;line-height:16px">+</div>
<div class="btn pm" style="left:65px;top:511px;width:38px;height:18px;line-height:16px">-</div>
<div class="btn" style="left:110px;top:511px;width:73px;height:18px;line-height:16px">Atualizar</div>
<div style="left:8px;top:539px;width:185px;height:1px;background:#a0a0a0"></div>
<div style="left:8px;top:540px;width:185px;height:1px;background:#fff"></div>
<span class="t " style="left:12px;top:539px;letter-spacing:-0.18px;">Executando Processos:</span>
<div style="left:9px;top:554px;width:184px;height:97px;background:#fff;border:1px solid #828790;border-left:2px solid #696969;border-top:1px solid #696969"></div>
<div class="btn dis" style="left:50px;top:658px;width:103px;height:20px;line-height:17px">Parar Processo</div>
<div style="left:8px;top:504px;width:2px;height:181px;background:#666"></div>
<svg style="left:194px;top:94px" width="8" height="26"><polygon points="7.500,1.500 7.500,12.500 1.300,7" fill="#000"/><polygon points="1.300,14.300 1.300,25 7.500,19.700" fill="#000"/></svg>
<div style="left:8px;top:685px;width:1005px;height:21px;background:#fff"></div>
<div style="left:8px;top:686px;width:1004px;height:19px;background:#f0f0f0;border:1px solid #a2a2a2"></div>
<span class="t " style="left:10px;top:688px;letter-spacing:-0.03px;">Contextos:44 Componentes:194</span>
<div style="left:202px;top:92px;width:810px;height:593px;background:#b9d1ea;border:1px solid #000;border-top:2px solid #3f4a59;border-right:none"></div>
<div style="left:203px;top:681px;width:808px;height:3px;background:linear-gradient(90deg,#b9d1ea,#aadcf2)"></div>
<div style="left:1011px;top:115px;width:1px;height:570px;background:#000"></div>
<div style="left:203px;top:94px;width:809px;height:21px;background:linear-gradient(90deg,rgba(255,255,255,.12),rgba(255,255,255,0) 30%),linear-gradient(#a1bcdc 0%,#a8c2e0 50%,#bad0e9 100%)"></div>
<svg style="left:207px;top:97px" width="14" height="14" viewBox="0 0 16 16"><path d="M1 3l3-1.500 3 1.500v3l-3 1.500-3-1.500z" fill="#3cb034"/><path d="M1 3l3 1.400 3-1.400-3-1.500z" fill="#7de070"/><path d="M8.500 3l3-1.500 3 1.500v3l-3 1.500-3-1.500z" fill="#e8981e"/><path d="M8.500 3l3 1.400 3-1.400-3-1.500z" fill="#ffd070"/><path d="M4.800 9l3-1.500 3 1.500v3l-3 1.500-3-1.500z" fill="#b83ccf"/><path d="M4.800 9l3 1.400 3-1.400-3-1.500z" fill="#e79af2"/></svg>
<span class="t " style="left:224px;top:97px;font-size:12px;letter-spacing:0.05px;color:#0c1830">C:\Program Files\jams\model.jam</span>
<div style="left:919px;top:96px;width:28px;height:16px;border:1px solid #8da5c6;border-radius:3px;background:linear-gradient(#cfddef 0%,#bccfe7 45%,#a3bddc 50%,#b5cbe6 100%);box-shadow:inset 0 0 0 1px rgba(255,255,255,.55)"></div>
<div style="left:949px;top:96px;width:28px;height:16px;border:1px solid #8da5c6;border-radius:3px;background:linear-gradient(#cfddef 0%,#bccfe7 45%,#a3bddc 50%,#b5cbe6 100%);box-shadow:inset 0 0 0 1px rgba(255,255,255,.55)"></div>
<div style="left:979px;top:96px;width:29px;height:16px;border:1px solid #431422;border-radius:3px;background:linear-gradient(#e9a99c 0%,#d98270 45%,#c4371c 50%,#cf5a3a 100%);box-shadow:inset 0 0 0 1px rgba(255,255,255,.35)"></div>
<svg style="left:919px;top:96px" width="28" height="16" viewBox="0 0 28 16"><rect x="9.500" y="7.500" width="9" height="4" rx="1" fill="#fff" stroke="#3c4a63"/></svg>
<svg style="left:949px;top:96px" width="28" height="16" viewBox="0 0 28 16"><rect x="11.500" y="3.500" width="7" height="6" rx="1" fill="#fff" stroke="#3c4a63"/><rect x="8.500" y="6.500" width="7" height="6" rx="1" fill="#fff" stroke="#3c4a63"/><rect x="10.500" y="8.500" width="3" height="2" fill="#8ea3c0" stroke="#3c4a63" stroke-width=".8"/></svg>
<svg style="left:979px;top:96px" width="29" height="16" viewBox="0 0 29 16"><path d="M9 3.200h3.800l1.700 2.200 1.700-2.200h3.800l-3.500 4.300 3.500 4.300h-3.800l-1.700-2.200-1.700 2.200h-3.800l3.500-4.300z" fill="#fff" stroke="#6b3a3a" stroke-width="0.900" stroke-linejoin="round"/></svg>
<div style="left:210px;top:115px;width:794px;height:566px;background:#f0f0f0;border-top:1px solid #626a74"></div>
<div style="left:1001px;top:116px;width:3px;height:565px;background:#fdfdfd"></div>
<div style="left:376px;top:679px;width:628px;height:2px;background:#fdfdfd"></div>
<div style="left:210px;top:115px;width:161px;height:536px;background:#fff;border:1px solid #828790;border-top:2px solid #6b6b6b;border-left:2px solid #6b6b6b"></div>
<div class="dotv" style="left:220px;top:133px;width:1px;height:8px;"></div>
<div class="dotv" style="left:239px;top:149px;width:1px;height:41px;"></div>
<svg style="left:212px;top:117px" width="16" height="16" viewBox="0 0 16 16"><circle cx="4.500" cy="4.700" r="3.900" fill="#2fae2f"/><circle cx="3.600" cy="3.700" r="1.800" fill="#6fd66a" opacity=".8"/><circle cx="11.500" cy="4.700" r="3.900" fill="#eba531"/><circle cx="10.800" cy="3.600" r="1.800" fill="#fbd483" opacity=".8"/><circle cx="8" cy="10.600" r="3.900" fill="#c24fe0"/><circle cx="7.200" cy="9.600" r="1.800" fill="#e69cf5" opacity=".8"/></svg>
<span class="t " style="left:231px;top:117px;letter-spacing:-0.25px;">Novo Modelo</span>
<div class="doth" style="left:226px;top:141px;width:5px;height:1px;"></div>
<div class="exp" style="left:216px;top:137px"><i></i></div>
<svg style="left:231px;top:133px" width="16" height="16" viewBox="0 0 16 16"><circle cx="4.500" cy="4.700" r="3.900" fill="#2fae2f"/><circle cx="3.600" cy="3.700" r="1.800" fill="#6fd66a" opacity=".8"/><circle cx="11.500" cy="4.700" r="3.900" fill="#eba531"/><circle cx="10.800" cy="3.600" r="1.800" fill="#fbd483" opacity=".8"/><circle cx="8" cy="10.600" r="3.900" fill="#c24fe0"/><circle cx="7.200" cy="9.600" r="1.800" fill="#e69cf5" opacity=".8"/></svg>
<span class="t " style="left:250.5px;top:133px;letter-spacing:-0.21px;">JAMSTemporalContext</span>
<div class="doth" style="left:240px;top:157px;width:11px;height:1px;"></div>
<svg style="left:251px;top:149px" width="16" height="16" viewBox="0 0 16 16"><rect x="4.200" y="0.400" width="3.400" height="4" rx="1.400" fill="#f2fbe6" stroke="#bfe79c" stroke-width=".7"/><path d="M1 3.300h9.800v3.400c1.400-.8 3.800-.4 3.800 1.500s-2.400 2.400-3.800 1.600v4h-3.200c.4-1.300-2.200-1.300-1.800 0h-4.800v-3.400c1.300.6 1.300-2 0-1.500z" fill="url(#gPuz)"/><path d="M10.800 6.700c1.400-.8 3.800-.4 3.800 1.500s-2.400 2.400-3.800 1.600z" fill="#76c034"/></svg>
<span class="t " style="left:269.5px;top:149px;letter-spacing:-0.41px;">ABCDataReader</span>
<div class="doth" style="left:240px;top:173px;width:11px;height:1px;"></div>
<svg style="left:251px;top:165px" width="16" height="16" viewBox="0 0 16 16"><rect x="4.200" y="0.400" width="3.400" height="4" rx="1.400" fill="#f2fbe6" stroke="#bfe79c" stroke-width=".7"/><path d="M1 3.300h9.800v3.400c1.400-.8 3.800-.4 3.800 1.500s-2.400 2.400-3.800 1.600v4h-3.200c.4-1.300-2.200-1.300-1.800 0h-4.800v-3.400c1.300.6 1.300-2 0-1.500z" fill="url(#gPuz)"/><path d="M10.800 6.700c1.400-.8 3.800-.4 3.800 1.500s-2.400 2.400-3.800 1.600z" fill="#76c034"/></svg>
<span class="t " style="left:269.5px;top:165px;letter-spacing:-0.71px;">ABCModel</span>
<div class="doth" style="left:240px;top:189px;width:11px;height:1px;"></div>
<svg style="left:251px;top:181px" width="16" height="16" viewBox="0 0 16 16"><rect x="4.200" y="0.400" width="3.400" height="4" rx="1.400" fill="#f2fbe6" stroke="#bfe79c" stroke-width=".7"/><path d="M1 3.300h9.800v3.400c1.400-.8 3.800-.4 3.800 1.500s-2.400 2.400-3.800 1.600v4h-3.200c.4-1.300-2.200-1.300-1.800 0h-4.800v-3.400c1.300.6 1.300-2 0-1.500z" fill="url(#gPuz)"/><path d="M10.800 6.700c1.400-.8 3.800-.4 3.800 1.500s-2.400 2.400-3.800 1.600z" fill="#76c034"/></svg>
<div style="left:269px;top:181px;width:34px;height:16px;background:#3399ff"></div>
<span class="t " style="left:269.5px;top:181px;letter-spacing:-0.60px;color:#fff">TSPlot</span>
<div class="btn pm" style="left:249px;top:657px;width:38px;height:18px;line-height:16px">+</div>
<div class="btn pm" style="left:294px;top:657px;width:38px;height:18px;line-height:16px">-</div>
<div style="left:376px;top:137px;width:625px;height:542px;background:#fff;border:1px solid #898c95"></div>
<div style="left:530px;top:120px;width:217px;height:18px;background:linear-gradient(#f2f2f2,#ebebeb 50%,#dddddd 50%,#cfcfcf);border:1px solid #898c95;border-bottom:none;border-radius:2px 2px 0 0"></div>
<span class="t " style="left:535px;top:120px;letter-spacing:-0.11px;">Editor de Interface Gráfica de Usuário(GUI)</span>
<div style="left:375px;top:117px;width:156px;height:21px;background:#fff;border:1px solid #7d8088;border-left:2px solid #70747b;border-bottom:none;border-radius:2px 2px 0 0"></div>
<span class="t " style="left:383px;top:119px;letter-spacing:-0.13px;">Configuração do componente</span>
<div style="left:378px;top:141px;width:622px;height:537px;background:#f0f0f0;border:1px solid #828790"></div>
<div class="sbv" style="left:982px;top:142px;width:17px;height:519px;"></div>
<svg style="left:0;top:0" width="1021" height="715"><polygon points="987.0,152.8 994.0,152.8 990.5,149.2" fill="#404040"/></svg>
<svg style="left:0;top:0" width="1021" height="715"><polygon points="987.0,649.7 994.0,649.7 990.5,653.3" fill="#404040"/></svg>
<div class="thv" style="left:983px;top:160px;width:15px;height:406px;"></div>
<div style="left:987px;top:359px;width:7px;height:1px;background:linear-gradient(90deg,#3a3a3a,#8a8a8a)"></div>
<div style="left:987px;top:360px;width:7px;height:1px;background:#fff"></div>
<div style="left:987px;top:362px;width:7px;height:1px;background:linear-gradient(90deg,#3a3a3a,#8a8a8a)"></div>
<div style="left:987px;top:363px;width:7px;height:1px;background:#fff"></div>
<div style="left:987px;top:365px;width:7px;height:1px;background:linear-gradient(90deg,#3a3a3a,#8a8a8a)"></div>
<div style="left:987px;top:366px;width:7px;height:1px;background:#fff"></div>
<div class="sbh" style="left:379px;top:661px;width:603px;height:16px;"></div>
<div style="left:982px;top:661px;width:17px;height:16px;background:#f0f0f0"></div>
<svg style="left:0;top:0" width="1021" height="715"><polygon points="387.8,665.5 387.8,672.5 384.2,669" fill="#404040"/></svg>
<svg style="left:0;top:0" width="1021" height="715"><polygon points="972.2,665.5 972.2,672.5 975.8,669" fill="#404040"/></svg>
<div class="thh" style="left:397px;top:662px;width:529px;height:14px;"></div>
<div style="left:658px;top:665px;width:1px;height:7px;background:linear-gradient(#3a3a3a,#8a8a8a)"></div>
<div style="left:659px;top:665px;width:1px;height:7px;background:#fff"></div>
<div style="left:661px;top:665px;width:1px;height:7px;background:linear-gradient(#3a3a3a,#8a8a8a)"></div>
<div style="left:662px;top:665px;width:1px;height:7px;background:#fff"></div>
<div style="left:664px;top:665px;width:1px;height:7px;background:linear-gradient(#3a3a3a,#8a8a8a)"></div>
<div style="left:665px;top:665px;width:1px;height:7px;background:#fff"></div>
<div style="left:379px;top:142px;width:603px;height:519px;overflow:hidden"><div style="left:-379px;top:-142px;width:1021px;height:715px">
<span class="t b" style="left:386px;top:152px;font-size:12.5px;letter-spacing:-0.47px;">Nome:</span>
<div class="fld" style="left:428px;top:149px;width:344px;height:19px;line-height:17px;letter-spacing:-0.6px">TSPlot</div>
<div class="btn" style="left:778px;top:150px;width:18px;height:18px;line-height:12px;font-weight:bold;letter-spacing:1.2px;padding-left:1px">...</div>
<span class="t b" style="left:386px;top:174px;font-size:12.5px;letter-spacing:-0.20px;">Tipo:</span>
<div class="fld" style="left:428px;top:173px;width:344px;height:17px;line-height:15px">jams.components.gui.TSPlot</div>
<span class="t b" style="left:386px;top:209px;font-size:12.5px;letter-spacing:0.13px;">Visão Geral do atributo:</span>
<div style="left:386px;top:249px;width:700px;height:206px;background:#fff;border:1px solid #898c95"></div>
<div style="left:520px;top:232px;width:146px;height:18px;background:linear-gradient(#f2f2f2,#ebebeb 50%,#dddddd 50%,#cfcfcf);border:1px solid #898c95;border-bottom:none;border-radius:2px 2px 0 0"></div>
<span class="t " style="left:526px;top:233px;letter-spacing:-0.01px;color:#fff">Atributos do contexto (local)</span>
<span class="t " style="left:525px;top:232px;letter-spacing:-0.01px;color:#9a9a9a">Atributos do contexto (local)</span>
<div style="left:386px;top:229px;width:135px;height:21px;background:#fff;border:1px solid #898c95;border-bottom:none;border-radius:2px 2px 0 0"></div>
<span class="t " style="left:394px;top:231px;">Atributos do componente</span>
<div style="left:388px;top:253px;width:700px;height:200px;background:#fff;border:1px solid #828790"></div>
<div style="left:389px;top:254px;width:700px;height:23px;background:linear-gradient(#ffffff 0%,#ffffff 38%,#f4f4f5 46%,#eeeef0 100%);border-bottom:1px solid #d0d0d0"></div>
<div style="left:530px;top:254px;width:1px;height:22px;background:linear-gradient(#f4f4f4,#dedede)"></div>
<div style="left:651px;top:254px;width:1px;height:22px;background:linear-gradient(#f4f4f4,#dedede)"></div>
<div style="left:686px;top:254px;width:1px;height:22px;background:linear-gradient(#f4f4f4,#dedede)"></div>
<div style="left:877px;top:254px;width:1px;height:22px;background:linear-gradient(#f4f4f4,#dedede)"></div>
<span class="t " style="left:393px;top:259px;letter-spacing:-0.78px;">Nome</span>
<span class="t " style="left:535px;top:259px;letter-spacing:0.00px;">Tipo</span>
<span class="t " style="left:656px;top:259px;letter-spacing:-0.19px;">R/W</span>
<span class="t " style="left:691px;top:259px;letter-spacing:0.06px;">Atributo de Contexto</span>
<span class="t " style="left:882px;top:259px;letter-spacing:0.16px;">Valor</span>
<span class="t " style="left:389.5px;top:278px;letter-spacing:-0.01px;">plotTitle</span>
<span class="t " style="left:531px;top:278px;letter-spacing:-0.52px;">JAMSString</span>
<span class="t " style="left:652px;top:278px;">R</span>
<div style="left:389px;top:294px;width:700px;height:1px;background:#858585"></div>
<span class="t " style="left:389.5px;top:294px;letter-spacing:0.19px;">titleLeft</span>
<span class="t " style="left:531px;top:294px;letter-spacing:-0.25px;">JAMSStringArray</span>
<span class="t " style="left:652px;top:294px;">R</span>
<div style="left:389px;top:310px;width:700px;height:1px;background:#858585"></div>
<span class="t " style="left:389.5px;top:310px;letter-spacing:0.14px;">varTitleLeft</span>
<span class="t " style="left:531px;top:310px;letter-spacing:-0.25px;">JAMSStringArray</span>
<span class="t " style="left:652px;top:310px;">R</span>
<div style="left:389px;top:326px;width:700px;height:1px;background:#858585"></div>
<span class="t " style="left:389.5px;top:326px;letter-spacing:0.08px;">titleRight</span>
<span class="t " style="left:531px;top:326px;letter-spacing:-0.25px;">JAMSStringArray</span>
<span class="t " style="left:652px;top:326px;">R</span>
<div style="left:389px;top:342px;width:700px;height:1px;background:#858585"></div>
<div style="left:389px;top:343px;width:700px;height:15px;background:#3399ff"></div>
<span class="t " style="left:389.5px;top:342px;letter-spacing:-0.02px;color:#fff">colorLeft</span>
<span class="t " style="left:531px;top:342px;letter-spacing:-0.25px;color:#fff">JAMSStringArray</span>
<span class="t " style="left:652px;top:342px;color:#fff">R</span>
<span class="t " style="left:878px;top:342px;color:#fff">blue;red</span>
<div style="left:389px;top:358px;width:700px;height:1px;background:#858585"></div>
<span class="t " style="left:389.5px;top:358px;letter-spacing:-0.12px;">colorRight</span>
<span class="t " style="left:531px;top:358px;letter-spacing:-0.25px;">JAMSStringArray</span>
<span class="t " style="left:652px;top:358px;">R</span>
<div style="left:389px;top:374px;width:700px;height:1px;background:#858585"></div>
<span class="t " style="left:389.5px;top:374px;letter-spacing:0.27px;">typeLeft</span>
<span class="t " style="left:531px;top:374px;letter-spacing:-0.22px;">JAMSInteger</span>
<span class="t " style="left:652px;top:374px;">R</span>
<div style="left:389px;top:390px;width:700px;height:1px;background:#858585"></div>
<span class="t " style="left:389.5px;top:390px;letter-spacing:0.12px;">typeRight</span>
<span class="t " style="left:531px;top:390px;letter-spacing:-0.22px;">JAMSInteger</span>
<span class="t " style="left:652px;top:390px;">R</span>
<div style="left:389px;top:406px;width:700px;height:1px;background:#858585"></div>
<span class="t " style="left:389.5px;top:406px;letter-spacing:-0.09px;">xAxisTitle</span>
<span class="t " style="left:531px;top:406px;letter-spacing:-0.52px;">JAMSString</span>
<span class="t " style="left:652px;top:406px;">R</span>
<div style="left:389px;top:422px;width:700px;height:1px;background:#858585"></div>
<span class="t " style="left:389.5px;top:422px;letter-spacing:-0.00px;">leftAxisTitle</span>
<span class="t " style="left:531px;top:422px;letter-spacing:-0.52px;">JAMSString</span>
<span class="t " style="left:652px;top:422px;">R</span>
<div style="left:389px;top:438px;width:700px;height:1px;background:#858585"></div>
<span class="t " style="left:389.5px;top:438px;letter-spacing:-0.10px;">rightAxisTitle</span>
<span class="t " style="left:531px;top:438px;letter-spacing:-0.52px;">JAMSString</span>
<span class="t " style="left:652px;top:438px;">R</span>
<div style="left:530px;top:277px;width:1px;height:175px;background:#858585"></div>
<div style="left:651px;top:277px;width:1px;height:175px;background:#858585"></div>
<div style="left:686px;top:277px;width:1px;height:175px;background:#858585"></div>
<div style="left:877px;top:277px;width:1px;height:175px;background:#858585"></div>
<span class="t b" style="left:386px;top:474px;font-size:12.5px;letter-spacing:0.28px;">configuração do atributo:</span>
<div style="left:392px;top:499px;width:700px;height:300px;border:1px solid #8e8e8e;box-shadow:inset 1px 1px 0 #fff"></div>
<span class="t " style="left:404px;top:509px;letter-spacing:-0.21px;">Componente:</span>
<span class="t " style="left:404px;top:533px;letter-spacing:-0.41px;">Nome local:</span>
<span class="t " style="left:404px;top:557px;letter-spacing:-0.46px;">Link:</span>
<span class="t " style="left:404px;top:592px;letter-spacing:-0.18px;">Valor:</span>
<div class="fld" style="left:473px;top:507px;width:319px;height:19px;line-height:18px;letter-spacing:-0.6px">TSPlot</div>
<div class="fld" style="left:473px;top:531px;width:319px;height:19px;line-height:18px">colorLeft</div>
<div class="fld" style="left:473px;top:555px;width:319px;height:19px;"></div>
<div class="fld" style="left:473px;top:593px;width:249px;height:19px;background:#fff;line-height:18px">blue;red</div>
<div class="btn dis" style="left:798px;top:556px;width:38px;height:18px;line-height:16px">LINK</div>
<div class="btn" style="left:798px;top:594px;width:38px;height:18px;line-height:16px;border-color:#2c628b;background:linear-gradient(#e3f3fc 0%,#c2e3f6 46%,#8ccaec 54%,#6ab4dd 100%);box-shadow:inset 0 0 0 1px rgba(120,215,250,.55)">SET</div>
<div style="left:851px;top:499px;width:132px;height:162px;background:#fff;border-left:1px solid #6e6e6e;border-top:1px solid #828790"></div>
<div style="left:852px;top:500px;width:131px;height:20px;background:linear-gradient(#fcfcfc 0%,#f0f0f0 50%,#d6d6d6 100%);border-bottom:1px solid #a0a0a0"></div>
<span class="t " style="left:856px;top:501px;letter-spacing:-0.19px;">JAMSTemporalContext</span>
</div></div>
</body></html>
